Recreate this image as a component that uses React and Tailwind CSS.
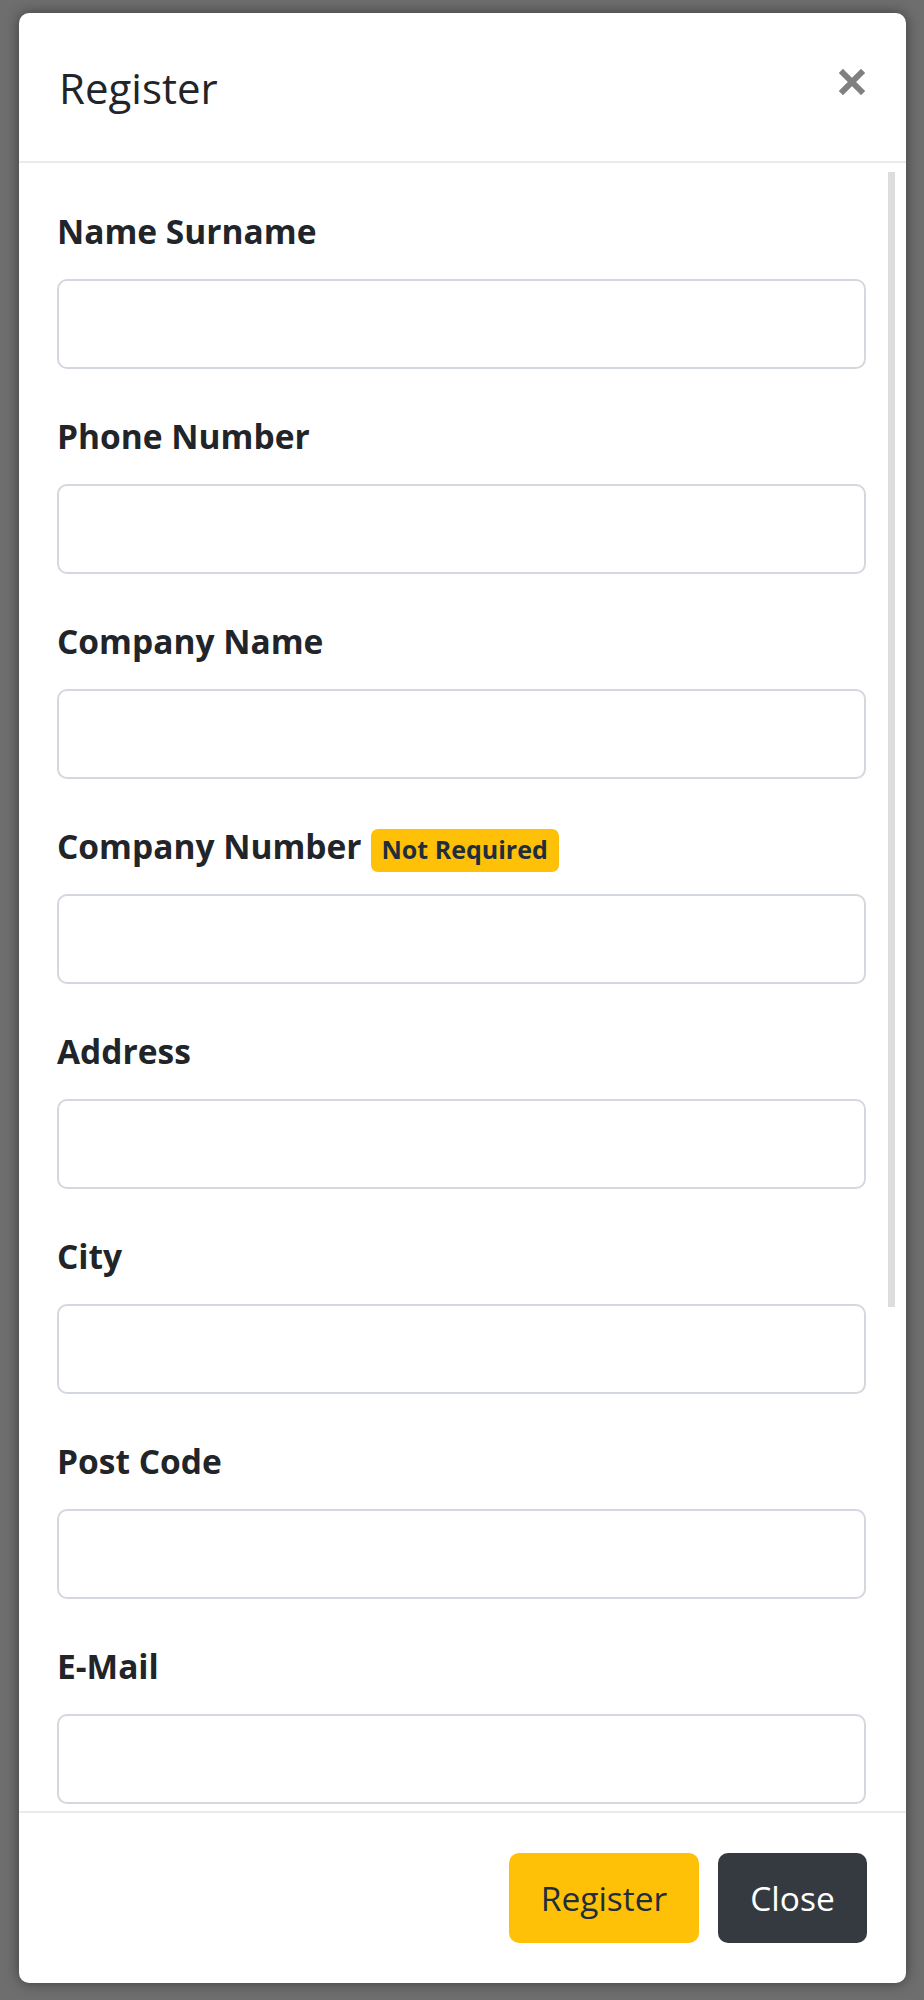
const FIELDS = [
  { label: "Name Surname" },
  { label: "Phone Number" },
  { label: "Company Name" },
  { label: "Company Number", optional: true },
  { label: "Address" },
  { label: "City" },
  { label: "Post Code" },
  { label: "E-Mail" },
];

function CloseIcon() {
  return (
    <svg width="26" height="26" viewBox="0 0 26 26">
      <path d="M4 4 L22 22 M22 4 L4 22" stroke="#808080" strokeWidth="6" strokeLinecap="square" />
    </svg>
  );
}

function Field({ label, optional }) {
  return (
    <div className="mb-[42px]">
      <div className="h-[50px] mb-[23px] flex items-center gap-[9px]">
        <span className="text-[33.5px] font-bold text-[#212529] leading-[50px]">{label}</span>
        {optional && (
          <span className="mt-[8px] bg-[#ffc107] text-[#1f2d3d] text-[25px] font-bold rounded-[7px] px-[11px] h-[43px] flex items-center">
            Not Required
          </span>
        )}
      </div>
      <input
        type="text"
        className="block w-full h-[90px] border-2 border-[#d3d8de] rounded-[10px] bg-white outline-none"
      />
    </div>
  );
}

export default function App() {
  return (
    <div
      className="min-h-[2000px] bg-[#6e6e6e] pt-[13px] pl-[19px] pr-[18px]"
      style={{ fontFamily: '"Open Sans", "Noto Sans", sans-serif' }}
    >
      <div className="h-[1970px] bg-white rounded-[10px] overflow-hidden flex flex-col shadow-[0_0_14px_rgba(0,0,0,0.45)]">
        <div className="h-[150px] shrink-0 flex items-center justify-between pl-[40px] pr-[41px] border-b-2 border-[#e9ecef]">
          <h4 className="text-[42px] font-normal text-[#212529]">Register</h4>
          <button className="-mt-[11px]">
            <CloseIcon />
          </button>
        </div>

        <div className="relative h-[1648px] shrink-0 overflow-hidden pt-[43px] pl-[38px] pr-[40px]">
          {FIELDS.map((f) => (
            <Field key={f.label} label={f.label} optional={f.optional} />
          ))}
          <div className="absolute top-[9px] right-[11px] w-[7px] h-[1135px] bg-[#dddddd]" />
        </div>

        <div className="flex-1 border-t-2 border-[#e9ecef] flex items-center justify-end gap-[19px] pr-[39px]">
          <button className="h-[90px] w-[190px] rounded-[10px] bg-[#ffc107] text-[#1f2d3d] text-[33.5px]">
            Register
          </button>
          <button className="h-[90px] w-[149px] rounded-[10px] bg-[#343a40] text-white text-[33.5px]">
            Close
          </button>
        </div>
      </div>
    </div>
  );
}
